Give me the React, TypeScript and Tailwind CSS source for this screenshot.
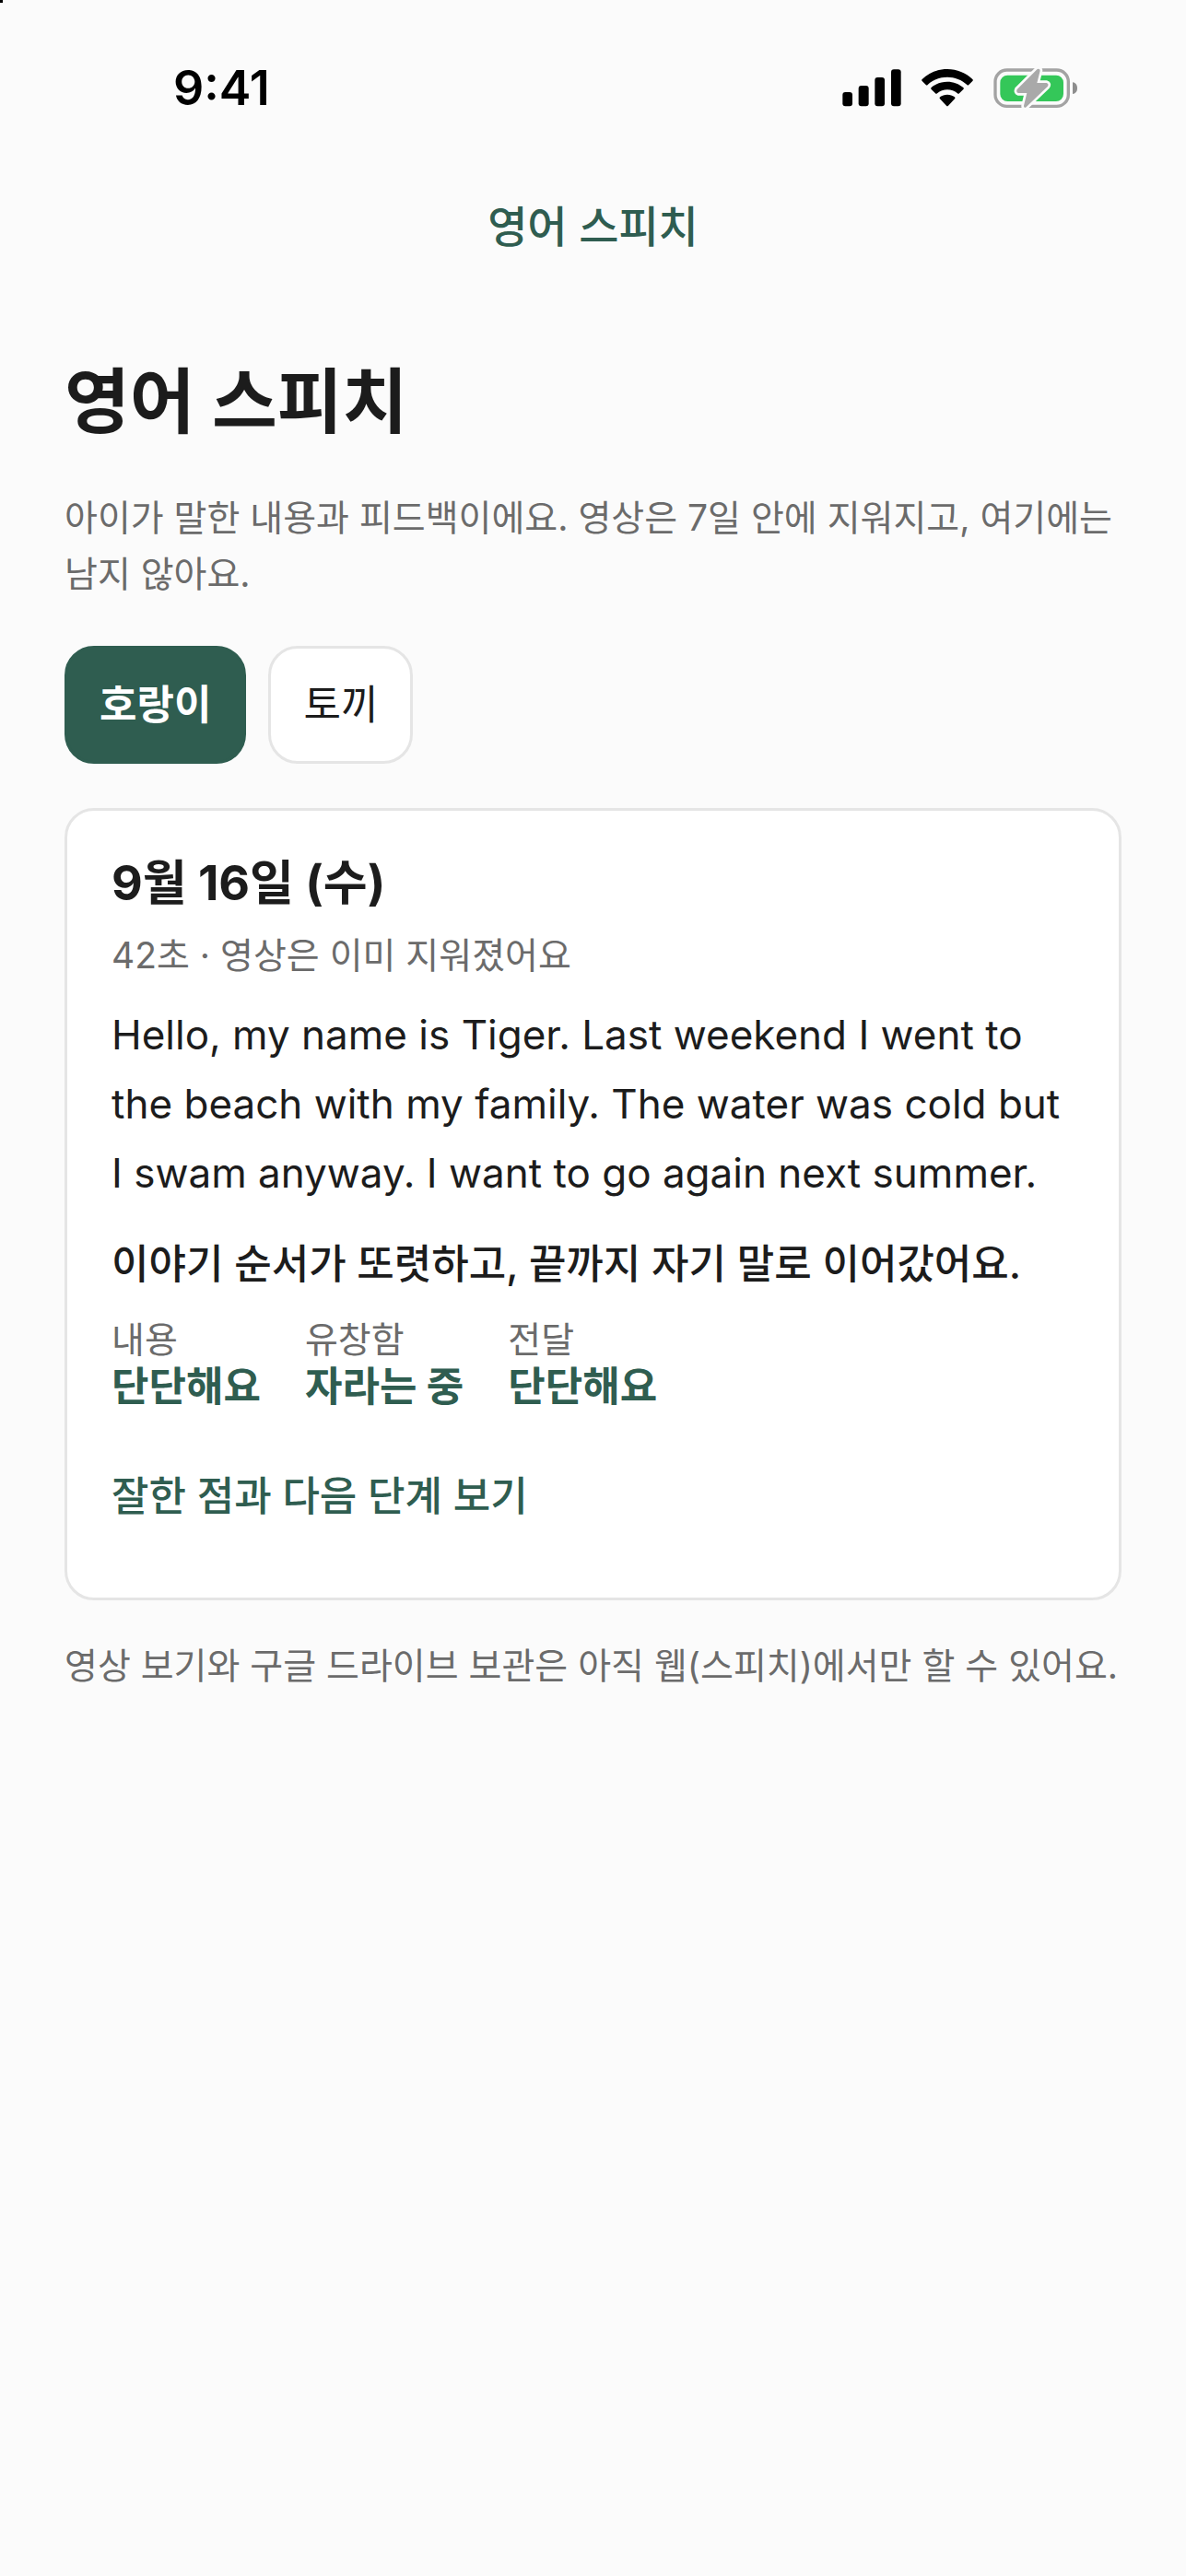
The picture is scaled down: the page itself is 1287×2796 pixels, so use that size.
import { useState } from "react";

const children = ["호랑이", "토끼"];

const scores = [
  { label: "내용", value: "단단해요" },
  { label: "유창함", value: "자라는 중" },
  { label: "전달", value: "단단해요" },
];

const SignalIcon = () => (
  <svg width="64" height="42" viewBox="0 0 192 126" aria-hidden="true">
    <rect x="1" y="75" width="32" height="46" rx="9" />
    <rect x="53" y="54" width="33" height="67" rx="9" />
    <rect x="106" y="27" width="32" height="94" rx="9" />
    <rect x="159" y="1" width="32" height="120" rx="9" />
  </svg>
);

const WifiIcon = () => (
  <svg width="56" height="42" viewBox="0 0 168 126" aria-hidden="true">
    <path d="M84 0C52 0 24 12 2 33Q-1 36 2 39L14 51Q17 54 20 51C37 35 60 26 84 26S131 35 148 51Q151 54 154 51L166 39Q169 36 166 33C144 12 116 0 84 0Z" />
    <path d="M84 41C64 41 46 48 32 60Q29 63 32 66L45 79Q48 82 51 79C60 71 72 67 84 67S108 71 117 79Q120 82 123 79L136 66Q139 63 136 60C122 48 104 41 84 41Z" />
    <path d="M84 83C75 83 67 86 60 91Q57 94 60 97L81 119Q84 122 87 119L108 97Q111 94 108 91C101 86 93 83 84 83Z" />
  </svg>
);

const BatteryIcon = () => (
  <svg width="92" height="44" viewBox="0 0 276 132" aria-hidden="true">
    <rect x="6" y="6" width="238" height="118" rx="38" fill="none" stroke="#a3a3a3" strokeWidth="10" />
    <rect x="22" y="23" width="206" height="85" rx="24" fill="#34c759" />
    <path d="M258 46C269 48 273 56 273 65S269 82 258 84Z" fill="#8e8e8e" />
    <path
      d="M143 3L77 69Q73 78 81 81H109L99 122Q98 130 105 128L176 60Q182 51 173 48H142L152 8Q151 0 143 3Z"
      fill="#a9a9a9"
      stroke="#fbfbfb"
      strokeWidth="16"
      strokeLinejoin="round"
      paintOrder="stroke"
    />
  </svg>
);

const StatusBar = () => {
  return (
    <div className="flex h-48 items-center justify-between pr-[117px] pl-[188px] text-black">
      <span className="text-[52px] leading-[60px] font-semibold">9:41</span>
      <div className="flex items-center gap-[22px]">
        <SignalIcon />
        <WifiIcon />
        <BatteryIcon />
      </div>
    </div>
  );
};

const App = () => {
  const [selected, setSelected] = useState("호랑이");

  return (
    <div className="min-h-screen bg-[#fbfbfb] font-['Inter','Noto_Sans_CJK_KR',sans-serif] text-[#1c1c1c]">
      <div className="absolute top-0 left-0 size-[3px] bg-black" />
      <StatusBar />

      {/* Nav title */}
      <header className="flex h-[108px] items-center justify-center text-[47px] leading-[60px] font-medium text-[#2f5d50]">
        영어 스피치
      </header>

      <main className="px-[70px] pt-[82px]">
        <h1 className="text-[77px] leading-[108px] font-bold">영어 스피치</h1>
        <p className="mt-[41px] text-[39px] leading-[61px] text-[#6b6b6b]">
          아이가 말한 내용과 피드백이에요. 영상은 7일 안에 지워지고, 여기에는
          남지 않아요.
        </p>

        {/* Child picker */}
        <div className="mt-12 flex gap-6">
          {children.map((name) => (
            <button
              key={name}
              type="button"
              aria-pressed={selected === name}
              onClick={() => setSelected(name)}
              className={`h-32 cursor-pointer rounded-[32px] border-[3px] px-[35px] text-[44px] leading-[54px] ${
                selected === name
                  ? "border-[#2f5d50] bg-[#2f5d50] font-bold text-white"
                  : "border-[#e5e5e5] bg-white"
              }`}>
              {name}
            </button>
          ))}
        </div>

        {/* Speech card */}
        <article className="mt-12 rounded-[32px] border-[3px] border-[#e5e5e5] bg-white px-12 pt-[46px] pb-[38px]">
          <h2 className="text-[52px] leading-[66px] font-bold">
            9월 16일 (수)
          </h2>
          <p className="mt-[18px] text-[39px] leading-[54px] text-[#6b6b6b]">
            42초 · 영상은 이미 지워졌어요
          </p>
          <p className="mt-[22px] text-[44px] leading-[75px]">
            Hello, my name is Tiger. Last weekend I went to the beach with my
            family. The water was cold but I swam anyway. I want to go again
            next summer.
          </p>
          <p className="mt-6 text-[44px] leading-[75px] font-medium">
            이야기 순서가 또렷하고, 끝까지 자기 말로 이어갔어요.
          </p>
          <dl className="mt-5 flex gap-12">
            {scores.map((score) => (
              <div key={score.label}>
                <dt className="text-[39px] leading-[48px] text-[#6b6b6b]">
                  {score.label}
                </dt>
                <dd className="text-[44px] leading-[54px] font-bold text-[#2f5d50]">
                  {score.value}
                </dd>
              </div>
            ))}
          </dl>
          <button
            type="button"
            className="mt-5 flex h-36 cursor-pointer items-center text-[44px] leading-[54px] font-medium text-[#2f5d50]">
            잘한 점과 다음 단계 보기
          </button>
        </article>

        <p className="mt-10 text-[39px] leading-[61px] text-[#6b6b6b]">
          영상 보기와 구글 드라이브 보관은 아직 웹(스피치)에서만 할 수 있어요.
        </p>
      </main>
    </div>
  );
};

export default App;
